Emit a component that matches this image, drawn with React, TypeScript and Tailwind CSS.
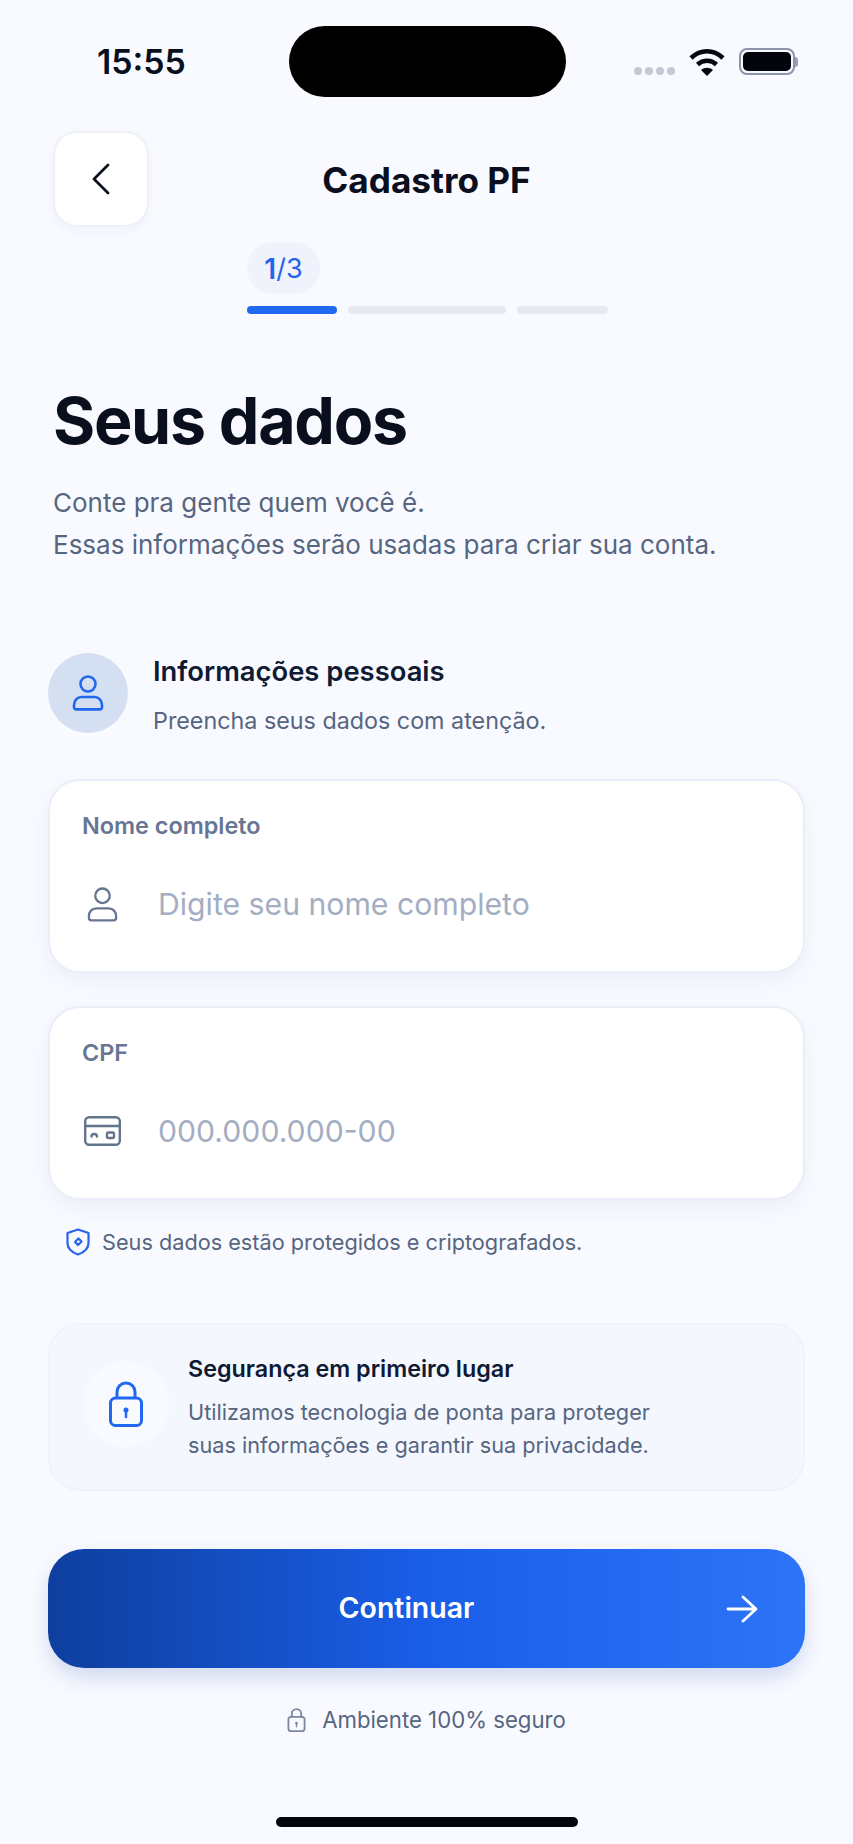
// Person icon: round head above a closed, rounded-top body
function PersonIcon({ className, strokeWidth }: { className: string; strokeWidth: number }) {
  return (
    <svg viewBox="0 0 32 36" fill="none" stroke="currentColor" strokeWidth={strokeWidth} className={className}>
      <circle cx="16" cy="9" r="7.5" />
      <path d="M9.5 22h13c4.4 0 7.5 3.6 7.5 8v2c0 1.4-1 2.4-2.4 2.4H4.4C3 34.4 2 33.4 2 32v-2c0-4.4 3.1-8 7.5-8z" />
    </svg>
  );
}

function IdCardIcon() {
  return (
    <svg viewBox="0 0 37 30" fill="none" stroke="currentColor" strokeWidth="2.4" strokeLinecap="round" className="-ml-[3px] h-[30px] w-[37px] text-[#64748b]">
      <rect x="1.2" y="1.2" width="34.6" height="27.6" rx="4" />
      <path d="M1.2 10h34.6" />
      <path d="M7.5 20.5c0-3.4 5.5-3.4 5.5 0" />
      <rect x="23" y="16.5" width="7" height="5.5" rx="1.5" />
    </svg>
  );
}

function ShieldIcon() {
  return (
    <svg viewBox="0 0 24 28" fill="none" stroke="currentColor" strokeWidth="2.2" strokeLinejoin="round" className="h-[28px] w-[24px] text-[#2563eb]">
      <path d="M12 1.5 22.5 5v10c0 5.6-4.4 9.4-10.5 11.5C5.9 24.4 1.5 20.6 1.5 15V5z" />
      <path d="m12.5 10.5 3 3-3.5 3.5-3-3z" />
    </svg>
  );
}

function LockIcon({ className, strokeWidth }: { className: string; strokeWidth: number }) {
  return (
    <svg viewBox="0 0 34 46" fill="none" stroke="currentColor" strokeWidth={strokeWidth} className={className}>
      <path d="M8 18v-7a9 9 0 0 1 18 0v7" />
      <rect x="1.5" y="17" width="31" height="27.5" rx="5" />
      <circle cx="17" cy="29" r="2.5" fill="currentColor" stroke="none" />
      <path d="M17 30v6" strokeLinecap="round" strokeWidth="2.5" />
    </svg>
  );
}

function FieldCard({ label, placeholder, icon }: { label: string; placeholder: string; icon: React.ReactNode }) {
  return (
    <div className="h-[194px] rounded-[32px] border-2 border-[#e9eef8] bg-white px-[32px] pt-[31px] shadow-[0_8px_20px_rgba(148,163,200,0.12)]">
      <p className="text-[23.4px] font-semibold leading-[28px] text-[#687693]">{label}</p>
      <div className="mt-[39px] flex h-[50px] items-center">
        <div className="flex w-[76px] justify-start pl-[5px]">{icon}</div>
        <span className="text-[30.2px] leading-[50px] text-[#a3aec2]">{placeholder}</span>
      </div>
    </div>
  );
}

export default function App() {
  return (
    <div className="flex h-[1844px] w-[853px] flex-col overflow-hidden bg-[#f9faff] font-['Inter',sans-serif]">
      {/* Status bar */}
      <div className="mt-[26px] flex h-[71px] items-center pl-[97px]">
        <span className="mt-[1px] w-[192px] text-[33.8px] font-semibold leading-none text-[#0a0f1e]">15:55</span>
        <div className="h-[71px] w-[277px] rounded-full bg-black" />
        <div className="ml-[68px] flex h-full items-center">
          <div className="flex gap-[3px] pt-[19px]">
            <span className="size-[8px] rounded-full bg-[#c3c8d4]" />
            <span className="size-[8px] rounded-full bg-[#c3c8d4]" />
            <span className="size-[8px] rounded-full bg-[#c3c8d4]" />
            <span className="size-[8px] rounded-full bg-[#c3c8d4]" />
          </div>
          <svg viewBox="0 0 36 28" className="ml-[14px] h-[28px] w-[36px]" fill="none" stroke="#05070f" strokeWidth="4.5">
            <path d="M2 10c9.5-9 22.5-9 32 0" />
            <path d="M8.5 16.5c5.5-5 13.5-5 19 0" />
            <path d="M18 28l-6-6c3.5-3 8.5-3 12 0z" fill="#05070f" stroke="none" />
          </svg>
          <div className="ml-[14px] flex items-center">
            <div className="h-[27px] w-[56px] rounded-[8px] border-2 border-[#8d95ad] p-[2px]">
              <div className="h-full w-full rounded-[5px] bg-[#03050d]" />
            </div>
            <div className="h-[10px] w-[3px] rounded-r-full bg-[#9aa1b5]" />
          </div>
        </div>
      </div>

      {/* Header */}
      <div className="mt-[34px] grid grid-cols-[96px_1fr_96px] items-center px-[53px]">
        <button className="flex h-[96px] w-[96px] items-center justify-center rounded-[24px] border-2 border-[#eef0f8] bg-white shadow-[0_4px_10px_rgba(148,163,200,0.08)]">
          <svg viewBox="0 0 18 32" fill="none" stroke="#0a0f1e" strokeWidth="2.8" strokeLinecap="round" strokeLinejoin="round" className="h-[32px] w-[18px]">
            <path d="M16 2 2 16l14 14" />
          </svg>
        </button>
        <h1 className="mt-[2px] text-center text-[35.2px] font-bold leading-[40px] text-[#0a0f1e]">Cadastro PF</h1>
      </div>

      {/* Steps */}
      <div className="ml-[247px] mt-[15px]">
        <div className="flex h-[52px] w-[73px] items-center justify-center rounded-full bg-[#f0f3fb] pt-[2px] text-[#2563eb]">
          <span className="text-[28px] font-semibold">1</span>
          <span className="text-[27px]">/3</span>
        </div>
        <div className="mt-[12px] flex gap-[11px]">
          <div className="h-[8px] w-[90px] rounded-full bg-[#2168f0]" />
          <div className="h-[8px] w-[158px] rounded-full bg-[#e6e9f2]" />
          <div className="h-[8px] w-[91px] rounded-full bg-[#e6e9f2]" />
        </div>
      </div>

      <div className="px-[48px]">
        {/* Intro */}
        <div className="pl-[5px]">
          <h2 className="mt-[69px] text-[64.5px] font-bold leading-[76px] tracking-[-0.02em] text-[#0a0f1e]">Seus dados</h2>
          <p className="mt-[23px] text-[26px] leading-[42px] text-[#566580]">
            Conte pra gente quem você é.
            <br />
            Essas informações serão usadas para criar sua conta.
          </p>
        </div>

        {/* Section title */}
        <div className="mt-[87px] flex gap-[25px]">
          <div className="flex size-[80px] items-center justify-center rounded-full bg-[#d5dff2]">
            <PersonIcon className="h-[36px] w-[32px] text-[#2168f0]" strokeWidth={2.6} />
          </div>
          <div>
            <p className="text-[27.4px] font-semibold leading-[36px] text-[#0f1a33]">Informações pessoais</p>
            <p className="mt-[15px] text-[23.3px] leading-[34px] text-[#566580]">Preencha seus dados com atenção.</p>
          </div>
        </div>

        {/* Fields */}
        <div className="mt-[41px]">
          <FieldCard
            label="Nome completo"
            placeholder="Digite seu nome completo"
            icon={<PersonIcon className="h-[35px] w-[31px] text-[#687693]" strokeWidth={2.4} />}
          />
        </div>
        <div className="mt-[33px]">
          <FieldCard label="CPF" placeholder="000.000.000-00" icon={<IdCardIcon />} />
        </div>

        <div className="mt-[27px] flex h-[30px] items-center gap-[12px] pl-[18px]">
          <ShieldIcon />
          <span className="text-[21.7px] leading-[30px] text-[#566580]">Seus dados estão protegidos e criptografados.</span>
        </div>

        {/* Security note */}
        <div className="mt-[66px] flex h-[168px] items-center gap-[19px] rounded-[32px] border-2 border-[#f0f3fb] bg-[#f4f7fe] pl-[33px]">
          <div className="-mt-[6px] flex size-[86px] items-center justify-center rounded-full bg-[#f9faff]">
            <LockIcon className="h-[46px] w-[34px] text-[#2168f0]" strokeWidth={3} />
          </div>
          <div className="mt-[1px]">
            <p className="text-[23.3px] font-semibold leading-[32px] text-[#0f1a33]">Segurança em primeiro lugar</p>
            <p className="mt-[11px] text-[21.7px] leading-[33px] text-[#566580]">
              Utilizamos tecnologia de ponta para proteger
              <br />
              suas informações e garantir sua privacidade.
            </p>
          </div>
        </div>

        {/* Continue */}
        <button className="relative mt-[58px] flex h-[119px] w-full items-center justify-center rounded-[36px] bg-gradient-to-r from-[#0e3f9f] via-[#1a5ee8] to-[#2d74f8] pr-[40px] shadow-[0_10px_20px_rgba(37,80,180,0.18)]">
          <span className="text-[28.5px] font-semibold text-white">Continuar</span>
          <svg viewBox="0 0 32 28" fill="none" stroke="white" strokeWidth="2.8" strokeLinecap="round" strokeLinejoin="round" className="absolute right-[47px] top-1/2 h-[28px] w-[32px] -translate-y-1/2">
            <path d="M2 14h28M17 2l13 12-13 12" />
          </svg>
        </button>

        <div className="mt-[38px] flex h-[28px] items-center justify-center gap-[16px]">
          <LockIcon className="h-[24px] w-[19px] text-[#7c88a0]" strokeWidth={3.5} />
          <span className="text-[22.2px] leading-[28px] text-[#566580]">Ambiente 100% seguro</span>
        </div>
      </div>

      {/* Home indicator */}
      <div className="mx-auto mb-[17px] mt-auto h-[10px] w-[302px] rounded-full bg-[#03050d]" />
    </div>
  );
}
